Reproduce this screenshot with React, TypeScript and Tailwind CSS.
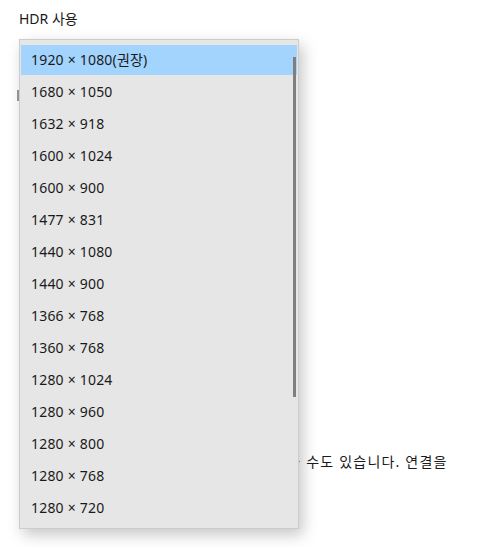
const resolutions = [
  "1920 × 1080(권장)",
  "1680 × 1050",
  "1632 × 918",
  "1600 × 1024",
  "1600 × 900",
  "1477 × 831",
  "1440 × 1080",
  "1440 × 900",
  "1366 × 768",
  "1360 × 768",
  "1280 × 1024",
  "1280 × 960",
  "1280 × 800",
  "1280 × 768",
  "1280 × 720",
];

export default function App() {
  return (
    <div
      className="relative h-[547px] w-[483px] overflow-hidden bg-white text-[14px] text-[#1a1a1a]"
      style={{ fontFamily: "'Noto Sans', 'Noto Sans CJK KR', sans-serif" }}
    >
      {/* settings page underneath */}
      <div className="px-[19px] pt-[9px]">
        <p className="leading-[20px]">HDR 사용</p>
        <div className="-ml-[2px] mt-[61px] h-[11px] w-[2px] bg-[#9a9a9a]" />
        <p className="mt-[351px] whitespace-nowrap leading-[20px] tracking-[1.2px]">
          일부 디스플레이는 HDR 영상이 밝기가 낮을 수도 있습니다. 연결을
        </p>
      </div>

      {/* resolution dropdown */}
      <div className="absolute left-[19px] top-[39px] h-[490px] w-[280px] border border-[#cccccc] bg-[#e6e6e6] px-px pt-[5px] shadow-[4px_6px_14px_rgba(0,0,0,0.22)]">
        <ul className="tracking-[0.2px]">
          {resolutions.map((r, i) => (
            <li
              key={r}
              className={
                i === 0
                  ? "mb-[2px] flex h-[30px] items-center bg-[#a2d4fd] pb-[2px] pl-[10px]"
                  : "flex h-[32px] items-center pb-[4px] pl-[10px]"
              }
            >
              {r}
            </li>
          ))}
        </ul>
        <div className="absolute left-[273px] top-[17px] h-[340px] w-[3px] bg-[#7f7f7f]" />
      </div>
    </div>
  );
}
